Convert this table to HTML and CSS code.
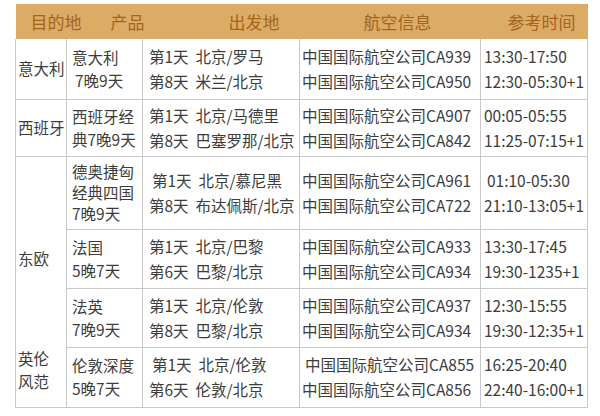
FILE: index.html
```html
<!DOCTYPE html>
<html lang="zh-CN">
<head>
<meta charset="utf-8">
<link rel="stylesheet" href="styles.css">
</head>
<body>
<table class="tbl">
  <colgroup>
    <col class="c1"><col class="c2"><col class="c3"><col class="c4"><col class="c5">
  </colgroup>
  <thead>
    <tr class="hd">
      <th class="h1">目的地</th>
      <th class="h2">产品</th>
      <th class="h3">出发地</th>
      <th class="h4">航空信息</th>
      <th class="h5">参考时间</th>
    </tr>
  </thead>
  <tbody>
    <tr class="r1">
      <td class="dest">意大利</td>
      <td class="prod">意大利<br><span class="ind">7晚9天</span></td>
      <td class="dep">第1天&nbsp; 北京/罗马<br>第8天&nbsp; 米兰/北京</td>
      <td class="air">中国国际航空公司CA939<br>中国国际航空公司CA950</td>
      <td class="time">13:30-17:50<br>12:30-05:30+1</td>
    </tr>
    <tr class="r2">
      <td class="dest">西班牙</td>
      <td class="prod">西班牙经<br>典7晚9天</td>
      <td class="dep">第1天&nbsp; 北京/马德里<br>第8天&nbsp; 巴塞罗那/北京</td>
      <td class="air">中国国际航空公司CA907<br>中国国际航空公司CA842</td>
      <td class="time">00:05-05:55<br>11:25-07:15+1</td>
    </tr>
    <tr class="r3">
      <td class="dest eu" rowspan="3">东欧</td>
      <td class="prod tight">德奥捷匈<br>经典四国<br>7晚9天</td>
      <td class="dep"><span class="ind">第1天&nbsp; 北京/慕尼黑</span><br>第8天&nbsp; 布达佩斯/北京</td>
      <td class="air">中国国际航空公司CA961<br>中国国际航空公司CA722</td>
      <td class="time"><span class="ind">01:10-05:30</span><br>21:10-13:05+1</td>
    </tr>
    <tr class="r4">
      <td class="prod">法国<br>5晚7天</td>
      <td class="dep">第1天&nbsp; 北京/巴黎<br>第6天&nbsp; 巴黎/北京</td>
      <td class="air">中国国际航空公司CA933<br>中国国际航空公司CA934</td>
      <td class="time">13:30-17:45<br>19:30-1235+1</td>
    </tr>
    <tr class="r5">
      <td class="prod">法英<br>7晚9天</td>
      <td class="dep">第1天&nbsp; 北京/伦敦<br>第8天&nbsp; 巴黎/北京</td>
      <td class="air">中国国际航空公司CA937<br>中国国际航空公司CA934</td>
      <td class="time">12:30-15:55<br>19:30-12:35+1</td>
    </tr>
    <tr class="r6">
      <td class="dest uk">英伦<br>风范</td>
      <td class="prod">伦敦深度<br>5晚7天</td>
      <td class="dep"><span class="ind">第1天&nbsp; 北京/伦敦</span><br>第6天&nbsp; 伦敦/北京</td>
      <td class="air"><span class="ind">中国国际航空公司CA855</span><br>中国国际航空公司CA856</td>
      <td class="time">16:25-20:40<br>22:40-16:00+1</td>
    </tr>
  </tbody>
</table>
</body>
</html>
```

FILE: styles.css
```css
html, body {
  margin: 0;
  padding: 0;
  background: #ffffff;
}
body {
  padding: 4px 0 0 15px;
  font-family: "Noto Sans CJK SC", "Noto Sans", sans-serif;
  color: #3d3d3d;
}
.tbl {
  border-collapse: collapse;
  table-layout: fixed;
  width: 572px;
}
.c1 { width: 51px; }
.c2 { width: 76px; }
.c3 { width: 157px; }
.c4 { width: 181px; }
.c5 { width: 107px; }

.hd {
  height: 35px;
  background: #dcab66;
}
.hd th {
  border: none;
  font-weight: normal;
  font-size: 17px;
  color: #a3641c;
  text-align: left;
  padding: 0;
  line-height: 35px;
  white-space: nowrap;
}
.h1 { padding-left: 15px !important; }
.h2 { padding-left: 44px !important; }
.h3 { padding-left: 86px !important; }
.h4 { padding-left: 64px !important; }
.h5 { padding-left: 27px !important; }

td {
  border: 1px solid #c9c9c9;
  font-size: 15.5px;
  line-height: 25px;
  vertical-align: middle;
  padding: 0;
  white-space: nowrap;
  overflow: visible;
}
.ind { padding-left: 3px; }
.dest { padding-left: 2px; }
.prod { padding-left: 5px; line-height: 23px; }
.prod.tight { line-height: 21px; }
.dep { padding-left: 6px; }
.air { padding-left: 2px; }
.time { padding-left: 3px; }

.r1 { height: 60px; }
.r2 { height: 57px; }
.r3 { height: 73px; }
.r4 { height: 59px; }
.r5 { height: 59px; }
.r6 { height: 57px; }

.eu {
  border-bottom-style: hidden;
  padding-top: 14px;
}
.uk {
  border-top-style: hidden;
  line-height: 23px;
  padding-bottom: 14px;
}
tbody tr:first-child td { border-top: none; }
```
